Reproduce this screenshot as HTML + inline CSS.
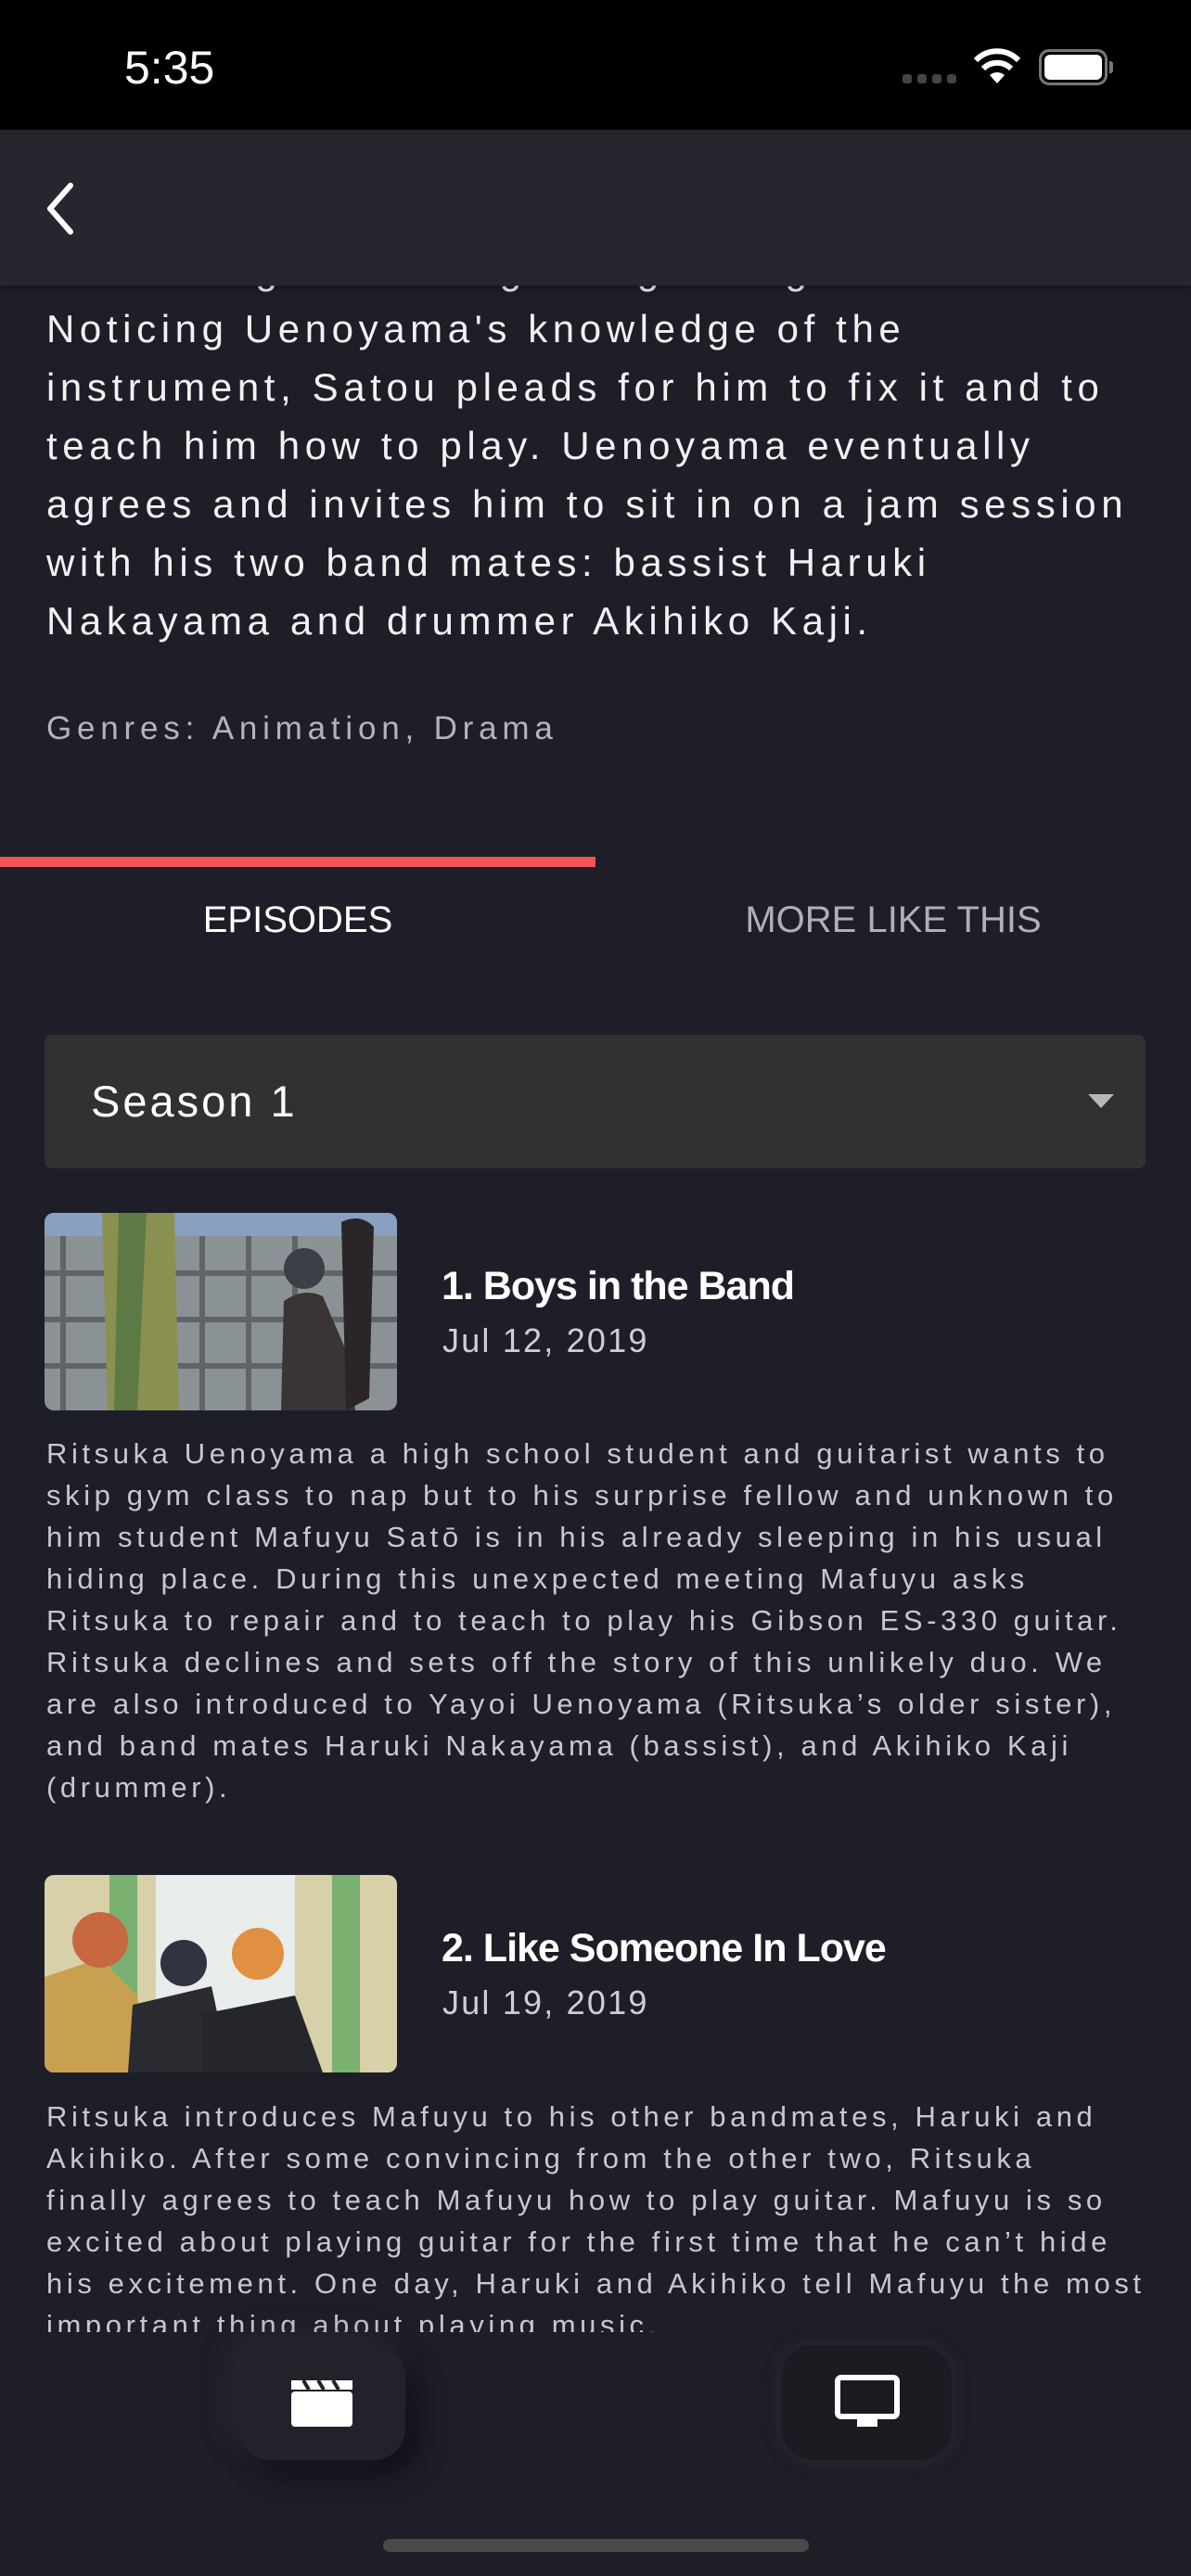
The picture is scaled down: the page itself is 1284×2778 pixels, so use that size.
<!DOCTYPE html>
<html><head><meta charset="utf-8"><style>
*{margin:0;padding:0;box-sizing:border-box}
body{width:1284px;height:2778px;background:#1e1e28;position:relative;overflow:hidden;font-family:"Liberation Sans",sans-serif;color:#fff}
.abs{position:absolute}
.desc{left:50px;top:260px;width:1240px;font-size:42px;line-height:63px;letter-spacing:5.6px;color:#f2f2f2;white-space:nowrap}
.ep{font-size:31px;line-height:45px;letter-spacing:4.6px;color:#c8c8cc;left:50px;width:1240px;white-space:nowrap}
.title{font-size:43px;font-weight:bold;letter-spacing:-1px;color:#fff;left:476px}
.date{font-size:36px;letter-spacing:2.2px;color:#cfcfd3;left:477px}
.thumb{left:48px;width:380px;height:213px;border-radius:10px;overflow:hidden}
</style></head><body>
<div class="abs" style="left:0;top:0;width:1284px;height:140px;background:#000"></div>
<div class="abs" style="left:134px;top:44px;font-size:50px;color:#fff">5:35</div>
<div class="abs" style="left:973px;top:80px;width:10px;height:10px;border-radius:3px;background:#444;box-shadow:16px 0 #444,32px 0 #444,48px 0 #444"></div>
<svg class="abs" style="left:1048px;top:52px" width="54" height="40" viewBox="0 0 54 40"><path d="M27 38 L19 29 A12 12 0 0 1 35 29 Z" fill="#fff"/><path d="M12 22 A21 21 0 0 1 42 22" stroke="#fff" stroke-width="6" fill="none"/><path d="M4 13 A32 32 0 0 1 50 13" stroke="#fff" stroke-width="6" fill="none"/></svg>
<div class="abs" style="left:1120px;top:53px;width:74px;height:39px;border:3px solid #777;border-radius:11px;padding:3px"><div style="width:100%;height:100%;background:#fff;border-radius:6px"></div></div>
<div class="abs" style="left:1196px;top:66px;width:4px;height:13px;background:#777;border-radius:0 3px 3px 0"></div>

<div class="desc abs">
a broken guitar string being changed.<br>
Noticing Uenoyama's knowledge of the<br>instrument, Satou pleads for him to fix it and to<br>teach him how to play. Uenoyama eventually<br>agrees and invites him to sit in on a jam session<br>with his two band mates: bassist Haruki<br>Nakayama and drummer Akihiko Kaji.</div>
<div class="abs" style="left:0;top:140px;width:1284px;height:168px;background:#25262e;box-shadow:0 3px 8px rgba(0,0,0,.3)"></div>
<svg class="abs" style="left:44px;top:194px" width="44" height="62" viewBox="0 0 44 62"><path d="M32 6 L10 31 L32 56" stroke="#fff" stroke-width="6" fill="none" stroke-linecap="round" stroke-linejoin="round"/></svg>

<div class="abs" style="left:50px;top:766px;font-size:35px;letter-spacing:5.8px;color:#b4b4b8">Genres: Animation, Drama</div>
<div class="abs" style="left:0;top:924px;width:642px;height:11px;background:#f45454"></div>
<div class="abs" style="left:0;top:970px;width:642px;text-align:center;font-size:40px;color:#fff">EPISODES</div>
<div class="abs" style="left:642px;top:970px;width:642px;text-align:center;font-size:40px;color:#b0b0b4">MORE LIKE THIS</div>
<div class="abs" style="left:48px;top:1116px;width:1187px;height:144px;background:#313131;border-radius:8px"></div>
<div class="abs" style="left:98px;top:1160px;font-size:47px;letter-spacing:3px;color:#fff">Season 1</div>
<div class="abs" style="left:1173px;top:1180px;width:0;height:0;border-left:14px solid transparent;border-right:14px solid transparent;border-top:15px solid #b8b8b8"></div>

<div class="abs thumb" style="top:1308px">
<svg width="380" height="213" viewBox="0 0 380 213"><rect width="380" height="213" fill="#8a9296"/><rect width="380" height="25" fill="#8aa0c0"/><g stroke="#5e6468" stroke-width="6"><line x1="20" y1="25" x2="20" y2="213"/><line x1="170" y1="25" x2="170" y2="213"/><line x1="220" y1="25" x2="220" y2="213"/><line x1="270" y1="25" x2="270" y2="213"/><line x1="0" y1="65" x2="380" y2="65"/><line x1="0" y1="115" x2="380" y2="115"/><line x1="0" y1="165" x2="380" y2="165"/></g><path d="M62 0 H140 L145 213 H68 Z" fill="#8a9050"/><path d="M80 0 H110 L100 213 H75 Z" fill="#5e7a44"/><path d="M258 95 Q280 80 300 90 L330 160 L335 213 H255 Z" fill="#3a3434"/><circle cx="280" cy="60" r="22" fill="#3c3e48"/><path d="M320 10 Q340 0 355 15 L350 200 L325 213 Z" fill="#2a2628"/></svg></div>
<div class="abs title" style="top:1363px">1. Boys in the Band</div>
<div class="abs date" style="top:1425px">Jul 12, 2019</div>
<div class="abs ep" style="top:1545px">Ritsuka Uenoyama a high school student and guitarist wants to<br>skip gym class to nap but to his surprise fellow and unknown to<br>him student Mafuyu Satō is in his already sleeping in his usual<br>hiding place. During this unexpected meeting Mafuyu asks<br>Ritsuka to repair and to teach to play his Gibson ES-330 guitar.<br>Ritsuka declines and sets off the story of this unlikely duo. We<br>are also introduced to Yayoi Uenoyama (Ritsuka’s older sister),<br>and band mates Haruki Nakayama (bassist), and Akihiko Kaji<br>(drummer).</div>

<div class="abs thumb" style="top:2022px">
<svg width="380" height="213" viewBox="0 0 380 213"><rect width="380" height="213" fill="#d8d0a8"/><rect x="70" y="0" width="30" height="213" fill="#7ab070"/><rect x="120" y="0" width="150" height="213" fill="#e8ecea"/><rect x="310" y="0" width="30" height="213" fill="#7ab070"/><path d="M0 110 L60 90 L100 130 L110 213 H0 Z" fill="#c8a050"/><circle cx="60" cy="70" r="30" fill="#c86840"/><path d="M95 140 L180 120 L200 213 H90 Z" fill="#2a2a30"/><circle cx="150" cy="95" r="25" fill="#303440"/><path d="M170 150 L270 130 L300 213 H170 Z" fill="#25262c"/><circle cx="230" cy="85" r="28" fill="#e09040"/></svg></div>
<div class="abs title" style="top:2077px">2. Like Someone In Love</div>
<div class="abs date" style="top:2139px">Jul 19, 2019</div>
<div class="abs" style="left:0;top:2260px;width:1284px;height:255px;overflow:hidden"><div class="ep abs" style="top:0">Ritsuka introduces Mafuyu to his other bandmates, Haruki and<br>Akihiko. After some convincing from the other two, Ritsuka<br>finally agrees to teach Mafuyu how to play guitar. Mafuyu is so<br>excited about playing guitar for the first time that he can’t hide<br>his excitement. One day, Haruki and Akihiko tell Mafuyu the most<br>important thing about playing music.</div></div>

<div class="abs" style="left:257px;top:2529px;width:180px;height:124px;border-radius:34px;background:#22222a;box-shadow:-10px -10px 30px rgba(60,60,72,.35),14px 16px 30px rgba(0,0,0,.45)"></div>
<svg class="abs" style="left:313px;top:2565px" width="68" height="52" viewBox="0 0 68 52"><rect x="1" y="14" width="66" height="38" rx="4" fill="#fff"/><path d="M1 2 H67 V12 H1 Z" fill="#fff"/><path d="M14 2 L20 12 M30 2 L36 12 M46 2 L52 12" stroke="#22222a" stroke-width="4"/></svg>
<div class="abs" style="left:842px;top:2529px;width:184px;height:124px;border-radius:34px;background:#1b1b22;box-shadow:0 0 18px rgba(70,70,82,.35)"></div>
<svg class="abs" style="left:900px;top:2561px" width="70" height="58" viewBox="0 0 70 58"><rect x="3" y="3" width="64" height="42" rx="4" fill="none" stroke="#fff" stroke-width="6"/><rect x="24" y="46" width="22" height="10" fill="#fff"/></svg>
<div class="abs" style="left:413px;top:2738px;width:459px;height:14px;border-radius:7px;background:#4a4a4a"></div>
</body></html>
